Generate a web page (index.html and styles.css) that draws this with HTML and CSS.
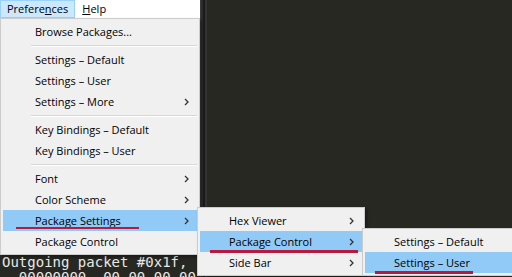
FILE: index.html
```html
<!DOCTYPE html>
<html lang="en">
<head>
  <meta charset="UTF-8" />
  <meta name="viewport" content="width=device-width, initial-scale=1" />
  <title>Preferences menu</title>
  <link rel="stylesheet" href="styles.css">
</head>
<body>
  <div class="screen">
    <div class="left-pane">
      <nav class="menubar">
        <span class="top-item open">Prefere<u>n</u>ces</span>
        <span class="top-item"><u>H</u>elp</span>
      </nav>
      <pre class="console">Outgoing packet #0x1f,
  00000000  00 00 00 00</pre>
    </div>
    <div class="divider"></div>
    <div class="editor"></div>
  </div>

  <!-- Preferences dropdown -->
  <div class="menu menu-main">
    <div class="item">Browse Packages...</div>
    <div class="sep"></div>
    <div class="item">Settings – Default</div>
    <div class="item">Settings – User</div>
    <div class="item">Settings – More <svg class="arrow" width="5" height="8" viewBox="0 0 5 8"><path d="M1 1 L4 4 L1 7" /></svg></div>
    <div class="sep"></div>
    <div class="item">Key Bindings – Default</div>
    <div class="item">Key Bindings – User</div>
    <div class="sep"></div>
    <div class="item">Font <svg class="arrow" width="5" height="8" viewBox="0 0 5 8"><path d="M1 1 L4 4 L1 7" /></svg></div>
    <div class="item">Color Scheme <svg class="arrow" width="5" height="8" viewBox="0 0 5 8"><path d="M1 1 L4 4 L1 7" /></svg></div>
    <div class="item active">Package Settings <svg class="arrow" width="5" height="8" viewBox="0 0 5 8"><path d="M1 1 L4 4 L1 7" /></svg><span class="mark mark-main"></span></div>
    <div class="item">Package Control</div>
  </div>

  <!-- Package Settings submenu -->
  <div class="menu sub menu-sub1">
    <div class="item">Hex Viewer <svg class="arrow" width="5" height="8" viewBox="0 0 5 8"><path d="M1 1 L4 4 L1 7" /></svg></div>
    <div class="item active">Package Control <svg class="arrow" width="5" height="8" viewBox="0 0 5 8"><path d="M1 1 L4 4 L1 7" /></svg><span class="mark mark-sub1"></span></div>
    <div class="item">Side Bar <svg class="arrow" width="5" height="8" viewBox="0 0 5 8"><path d="M1 1 L4 4 L1 7" /></svg></div>
  </div>

  <!-- Package Control submenu (runs off the right edge of the window) -->
  <div class="menu sub menu-sub2">
    <div class="item">Settings – Default</div>
    <div class="item active">Settings – User<span class="mark mark-sub2"></span></div>
  </div>
</body>
</html>
```

FILE: styles.css
```css
body {
  margin: 0;
  width: 512px;
  height: 277px;
  overflow: hidden;
  position: relative;
  background: #272822;
  font-family: 'Segoe UI', 'Open Sans', sans-serif;
  font-size: 11px;
  color: #000;
}

.screen {
  display: flex;
  height: 277px;
}

/* Left pane: menu bar on top, console below */
.left-pane {
  width: 200px;
  display: flex;
  flex-direction: column;
  overflow: hidden;
}

.menubar {
  height: 18px;
  background: #fff;
  display: flex;
  flex-shrink: 0;
}

.top-item {
  padding: 0 6px;
  border: 1px solid transparent;
  line-height: 16px;
}

.top-item.open {
  background: #cce8ff;
  border-color: #99d1ff;
}

.console {
  margin: 0;
  padding: 237px 0 0 2px;
  font-family: 'DejaVu Sans Mono', monospace;
  font-size: 14px;
  line-height: 15px;
  color: #e8e8e8;
  white-space: pre;
}

/* Scrollbar strip between panes */
.divider {
  width: 7px;
  flex-shrink: 0;
  background: linear-gradient(to right, #3a3a3a 0 1px, #2c2c2c 1px 3px, #1b1b1b 3px 5px, #333 5px 7px);
}

.editor {
  flex-grow: 1;
  background: #272822;
}

/* Dropdown menus */
.menu {
  position: absolute;
  background: #f0f0f0;
  border: 1px solid #cccccc;
  padding: 2px;
  box-shadow: 2px 2px 3px rgba(0, 0, 0, 0.35);
}

.menu-main {
  left: 0;
  top: 18px;
  width: 194px;
}

.menu-sub1 {
  left: 197px;
  top: 207px;
  width: 162px;
}

.menu-sub2 {
  left: 362px;
  top: 228px;
  width: 147px;
  border-right: none;
  padding-right: 0;
  box-shadow: none;
}

.item {
  position: relative;
  height: 21px;
  display: flex;
  align-items: center;
  padding: 0 8px 0 32px;
  white-space: nowrap;
}

.sub .item {
  padding-left: 29px;
}

.item.active {
  background: #91c9f7;
}

.arrow {
  margin-left: auto;
}

.arrow path {
  fill: none;
  stroke: #333;
  stroke-width: 1.3;
}

.sep {
  height: 1px;
  background: #d7d7d7;
  border-bottom: 1px solid #fff;
  margin: 3px 0 2px 28px;
}

/* Red annotation underlines */
.mark {
  position: absolute;
  background: #b8193f;
  height: 3px;
}

.mark-main {
  left: 13px;
  width: 123px;
  top: 17px;
  height: 2px;
}

.mark-sub1 {
  left: 10px;
  width: 148px;
  top: 19px;
}

.mark-sub2 {
  left: 10px;
  width: 98px;
  top: 19px;
}
```
